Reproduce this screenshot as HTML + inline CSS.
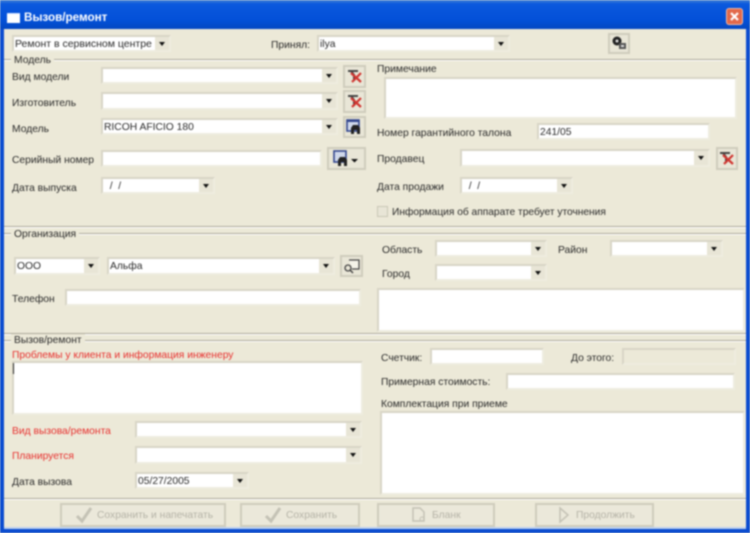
<!DOCTYPE html>
<html><head><meta charset="utf-8">
<style>
html,body{margin:0;padding:0;width:750px;height:533px;overflow:hidden;background:#ece9d8}
#w{position:relative;width:750px;height:533px;overflow:hidden;filter:blur(.7px);background:#ece9d8;font-family:"Liberation Sans",sans-serif;font-size:10.3px;color:#2a2a2a}
#w div,#w span,#w svg{position:absolute}
.l{white-space:nowrap;line-height:12px;margin-top:-4.5px}
.r{color:#e8312f}
.f{background:#fff;border:2px solid #d8d5c6;border-right-color:#eeecdf;border-bottom-color:#eeecdf;box-sizing:border-box;white-space:nowrap;line-height:15px;padding-left:1px}
.a{right:0;top:0;bottom:0;width:14px;background:#e8e5d6}
.a:after{content:"";position:absolute;left:3.5px;top:4.5px;border:3.5px solid transparent;border-top:4px solid #111;border-bottom:0}
.b{background:#e9e6d7;border:2px solid #cfccbc;box-sizing:border-box}
.h{height:1px;background:#aca899;box-shadow:0 1px 0 #fff}
.d{background:#ebe8da;border:2px solid #cfccbc;box-sizing:border-box;color:#b5b3a7;line-height:22px;white-space:nowrap}
.g{background:#ece9d8;padding:0 3px;line-height:13px;white-space:nowrap}
</style></head><body>
<div id="w">
<div style="left:0;top:0;width:750px;height:29px;background:linear-gradient(#3f7fd6 0,#0a58dd 4px,#0350d8 20px,#0348c4 28px)"></div>
<div style="left:0;top:29px;width:4px;height:504px;background:#0a4bd0"></div>
<div style="left:746px;top:29px;width:4px;height:504px;background:#0a4bd0"></div>
<div style="left:0;top:528px;width:750px;height:5px;background:#0a4bd0"></div>
<div style="left:4px;top:527px;width:742px;height:2px;background:#bcd0ee"></div>
<div style="left:7px;top:13px;width:13px;height:9px;background:#fff;border-top:1px solid #cfe0ff"></div>
<div style="left:24px;top:11px;color:#fff;font-weight:bold;font-size:11.7px;line-height:14px">Вызов/ремонт</div>
<div style="left:726px;top:8px;width:17px;height:17px;background:#e2694a;border-radius:3px;border:1px solid #f0b9a5;box-sizing:border-box"></div>
<svg style="left:726px;top:8px" width="17" height="17"><path d="M5 5L12 12M12 5L5 12" stroke="#fff" stroke-width="2.2"/></svg>

<div class="f" style="left:12px;top:35px;width:159px;height:17px;font-size:10.5px">Ремонт в сервисном центре<span class="a"></span></div>
<div class="l" style="left:271px;top:44px">Принял:</div>
<div class="f" style="left:317px;top:35px;width:193px;height:17px">ilya<span class="a"></span></div>
<div class="b" style="left:608px;top:33px;width:22px;height:21px"></div>
<svg style="left:610px;top:35px" width="18" height="17"><circle cx="7" cy="6" r="4.5" fill="#222"/><circle cx="7" cy="6" r="1.5" fill="#ddd"/><rect x="9" y="8" width="7" height="6" fill="#555"/><rect x="11" y="10" width="3" height="2" fill="#ddd"/></svg>

<div class="h" style="left:4px;top:59px;width:742px"></div>
<div class="g" style="left:11px;top:54px">Модель</div>
<div class="l" style="left:12px;top:76px">Вид модели</div>
<div class="f" style="left:101px;top:67px;width:237px;height:17px"><span class="a"></span></div>
<div class="b" style="left:343px;top:65px;width:23px;height:23px"></div>
<svg style="left:345px;top:67px" width="19" height="19"><path d="M3 4H13M6 4L9 8V14" stroke="#444" stroke-width="2" fill="none"/><path d="M6 6L16 15M16 6L7 15" stroke="#d03530" stroke-width="2.2"/></svg>
<div class="l" style="left:12px;top:102px">Изготовитель</div>
<div class="f" style="left:101px;top:92px;width:237px;height:18px"><span class="a"></span></div>
<div class="b" style="left:343px;top:90px;width:23px;height:23px"></div>
<svg style="left:345px;top:92px" width="19" height="19"><path d="M3 4H13M6 4L9 8V14" stroke="#444" stroke-width="2" fill="none"/><path d="M6 6L16 15M16 6L7 15" stroke="#d03530" stroke-width="2.2"/></svg>
<div class="l" style="left:12px;top:128px">Модель</div>
<div class="f" style="left:101px;top:118px;width:237px;height:17px">RICOH AFICIO 180<span class="a"></span></div>
<div class="b" style="left:343px;top:116px;width:23px;height:22px"></div>
<svg style="left:345px;top:118px" width="19" height="18"><rect x="2" y="2" width="12" height="11" fill="#cfd8ea" stroke="#34488f" stroke-width="1.6"/><path d="M2 3H14" stroke="#34488f" stroke-width="2"/><path d="M6 16V10L8 7H13L15 10V16H12V12H9V16Z" fill="#222"/></svg>
<div class="l" style="left:12px;top:159px">Серийный номер</div>
<div class="f" style="left:101px;top:150px;width:221px;height:17px"></div>
<div class="b" style="left:327px;top:147px;width:39px;height:23px"></div>
<svg style="left:333px;top:150px" width="30" height="18"><rect x="1" y="1" width="12" height="11" fill="#cfd8ea" stroke="#34488f" stroke-width="1.6"/><path d="M5 16V10L7 7H12L14 10V16H11V12H8V16Z" fill="#222"/><path d="M18 9H25L21.500 12.500Z" fill="#111"/></svg>
<div class="l" style="left:12px;top:187px">Дата выпуска</div>
<div class="f" style="left:101px;top:177px;width:114px;height:17px">&nbsp;&nbsp;/&nbsp;&nbsp;/<span class="a"></span></div>

<div class="l" style="left:377px;top:68px">Примечание</div>
<div class="f" style="left:384px;top:77px;width:353px;height:42px"></div>
<div class="l" style="left:377px;top:132px">Номер гарантийного талона</div>
<div class="f" style="left:537px;top:123px;width:173px;height:17px">241/05</div>
<div class="l" style="left:377px;top:158px">Продавец</div>
<div class="f" style="left:460px;top:149px;width:250px;height:18px"><span class="a"></span></div>
<div class="b" style="left:716px;top:147px;width:22px;height:23px"></div>
<svg style="left:717px;top:149px" width="19" height="19"><path d="M3 4H13M6 4L9 8V14" stroke="#444" stroke-width="2" fill="none"/><path d="M6 6L16 15M16 6L7 15" stroke="#d03530" stroke-width="2.2"/></svg>
<div class="l" style="left:377px;top:186px">Дата продажи</div>
<div class="f" style="left:460px;top:177px;width:113px;height:17px">&nbsp;&nbsp;/&nbsp;&nbsp;/<span class="a"></span></div>
<div style="left:377px;top:206px;width:11px;height:11px;box-sizing:border-box;border:1px solid #c9c6b6;background:#e8e5d6"></div>
<div class="l" style="left:392px;top:211px;font-size:10.2px">Информация об аппарате требует уточнения</div>

<div class="h" style="left:4px;top:226px;width:742px"></div>
<div class="h" style="left:4px;top:233px;width:742px"></div>
<div class="g" style="left:11px;top:228px">Организация</div>
<div class="f" style="left:14px;top:257px;width:86px;height:18px">ООО<span class="a"></span></div>
<div class="f" style="left:107px;top:257px;width:228px;height:18px">Альфа<span class="a"></span></div>
<div class="b" style="left:340px;top:255px;width:23px;height:22px"></div>
<svg style="left:342px;top:257px" width="19" height="18"><path d="M7 3H17V12H10" fill="#f4f2e8" stroke="#444" stroke-width="1.2"/><circle cx="6" cy="11" r="3" fill="none" stroke="#444" stroke-width="1.3"/><path d="M8 13L11 16" stroke="#444" stroke-width="1.5"/></svg>
<div class="l" style="left:12px;top:298px">Телефон</div>
<div class="f" style="left:65px;top:289px;width:296px;height:17px"></div>
<div class="l" style="left:382px;top:249px">Область</div>
<div class="f" style="left:435px;top:240px;width:112px;height:17px"><span class="a"></span></div>
<div class="l" style="left:558px;top:249px">Район</div>
<div class="f" style="left:610px;top:240px;width:113px;height:17px"><span class="a"></span></div>
<div class="l" style="left:382px;top:273px">Город</div>
<div class="f" style="left:435px;top:264px;width:112px;height:17px"><span class="a"></span></div>
<div class="f" style="left:377px;top:288px;width:368px;height:44px"></div>

<div class="h" style="left:4px;top:333px;width:742px"></div>
<div class="h" style="left:4px;top:340px;width:742px"></div>
<div class="g" style="left:11px;top:334px">Вызов/ремонт</div>
<div class="l r" style="left:12px;top:354px">Проблемы у клиента и информация инженеру</div>
<div class="f" style="left:12px;top:361px;width:351px;height:54px"></div>
<div style="left:13px;top:363px;width:1px;height:11px;background:#222"></div>
<div class="l r" style="left:12px;top:430px">Вид вызова/ремонта</div>
<div class="f" style="left:135px;top:421px;width:227px;height:17px"><span class="a"></span></div>
<div class="l r" style="left:12px;top:455px">Планируется</div>
<div class="f" style="left:135px;top:446px;width:227px;height:18px"><span class="a"></span></div>
<div class="l" style="left:12px;top:481px">Дата вызова</div>
<div class="f" style="left:135px;top:472px;width:114px;height:17px">05/27/2005<span class="a"></span></div>

<div class="l" style="left:381px;top:357px">Счетчик:</div>
<div class="f" style="left:430px;top:348px;width:114px;height:17px"></div>
<div class="l" style="left:571px;top:357px">До этого:</div>
<div class="f" style="left:622px;top:348px;width:114px;height:17px;background:#ece9d8"></div>
<div class="l" style="left:381px;top:381px">Примерная стоимость:</div>
<div class="f" style="left:506px;top:373px;width:229px;height:17px"></div>
<div class="l" style="left:381px;top:403px">Комплектация при приеме</div>
<div class="f" style="left:380px;top:411px;width:365px;height:84px"></div>

<div class="h" style="left:4px;top:498px;width:742px"></div>
<div class="d" style="left:60px;top:503px;width:166px;height:24px;padding-left:35px">Сохранить и напечатать</div>
<svg style="left:74px;top:505px" width="20" height="20"><path d="M3 11L8 16L17 3" stroke="#c4c2b5" stroke-width="3" fill="none"/></svg>
<div class="d" style="left:240px;top:503px;width:120px;height:24px;padding-left:44px">Сохранить</div>
<svg style="left:263px;top:505px" width="20" height="20"><path d="M3 11L8 16L17 3" stroke="#c4c2b5" stroke-width="3" fill="none"/></svg>
<div class="d" style="left:377px;top:503px;width:118px;height:24px;padding-left:53px">Бланк</div>
<svg style="left:410px;top:506px" width="18" height="18"><path d="M3 2H10L14 6V15H3Z" fill="none" stroke="#c4c2b5" stroke-width="1.5"/><circle cx="12" cy="13" r="2" fill="none" stroke="#c4c2b5"/></svg>
<div class="d" style="left:535px;top:503px;width:119px;height:24px;padding-left:39px">Продолжить</div>
<svg style="left:557px;top:506px" width="14" height="18"><path d="M3 2L11 9L3 16Z" fill="none" stroke="#c4c2b5" stroke-width="1.5"/></svg>
</div>
</body></html>
